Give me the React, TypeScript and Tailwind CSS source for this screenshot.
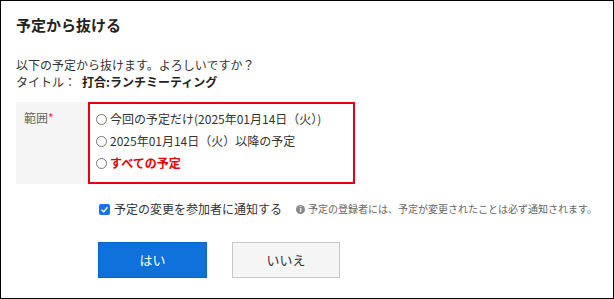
const font = { fontFamily: '"Noto Sans CJK JP", "Noto Sans", sans-serif' };

function Radio({ label, red }: { label: string; red?: boolean }) {
  return (
    <label className="flex items-center gap-[3px] h-[22px] whitespace-nowrap">
      <span className="w-[11px] h-[11px] rounded-full border border-[#777] bg-white shrink-0" />
      <span className={red ? 'text-[#e00000] font-bold' : 'text-[#333]'}>{label}</span>
    </label>
  );
}

export default function App() {
  return (
    <div
      className="w-[614px] h-[299px] border border-black bg-white text-[12px] leading-[16px] text-[#333] overflow-hidden"
      style={font}
    >
      <div className="pl-[15px] pt-[13px]">
        <h1 className="text-[15px] leading-[22px] font-bold text-[#222] whitespace-nowrap">予定から抜ける</h1>

        <div className="mt-[20px] whitespace-nowrap leading-[17px]">
          <p>以下の予定から抜けます。よろしいですか？</p>
          <p>
            タイトル：<span className="font-bold text-[#222] ml-[6px]">打合:ランチミーティング</span>
          </p>
        </div>

        <div className="mt-[12px] flex">
          <div className="w-[72px] bg-[#f5f5f5] pl-[8px] pt-[8px] text-[#666] whitespace-nowrap">
            範囲<span className="text-[#e33]">*</span>
          </div>
          <div className="w-[267px] h-[82px] border-2 border-[#e60012] pl-[6px] pt-[4px] bg-white">
            <Radio label="今回の予定だけ(2025年01月14日（火）)" />
            <Radio label="2025年01月14日（火）以降の予定" />
            <Radio label="すべての予定" red />
          </div>
        </div>

        <div className="mt-[17px] ml-[83px] flex items-center whitespace-nowrap">
          <span className="w-[11px] h-[11px] rounded-[2px] bg-[#1a73e8] flex items-center justify-center shrink-0">
            <svg viewBox="0 0 12 12" className="w-[9px] h-[9px]">
              <path d="M2 6.2 L5 9 L10 3" fill="none" stroke="white" strokeWidth="1.8" />
            </svg>
          </span>
          <span className="ml-[4px] text-[#333]">予定の変更を参加者に通知する</span>
          <span className="ml-[14px] flex items-center text-[10px] text-[#666]">
            <span className="w-[9px] h-[9px] rounded-full bg-[#888] text-white text-[7px] leading-[9px] font-bold text-center mr-[3px] shrink-0">
              i
            </span>
            予定の登録者には、予定が変更されたことは必ず通知されます。
          </span>
        </div>

        <div className="mt-[25px] ml-[82px] flex gap-[25px]">
          <button className="w-[109px] h-[36px] bg-[#0f71dc] text-white text-[13px] border border-[#0b63c5]">はい</button>
          <button className="w-[108px] h-[36px] bg-[#f5f5f5] text-[#333] text-[13px] border border-[#c8c8c8]">いいえ</button>
        </div>
      </div>
    </div>
  );
}
